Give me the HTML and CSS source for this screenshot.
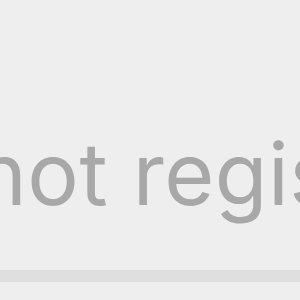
FILE: index.html
```html
<!DOCTYPE html>
<html lang="en">
<head>
    <meta charset="UTF-8">
    <title>Not registered</title>
    <link rel="stylesheet" href="styles.css">
</head>
<body>
    <div class="field">
        <div class="placeholder">not registered</div>
        <div class="underline"></div>
    </div>
</body>
</html>
```

FILE: styles.css
```css
body {
    margin: 0;
    background: #efeeee;
    font-family: Inter, 'Liberation Sans', sans-serif;
    overflow: hidden;
    width: 300px;
    height: 300px;
}
.field {
    padding-top: 124px;
}
.placeholder {
    margin-left: -24px;
    font-size: 86px;
    line-height: 100px;
    letter-spacing: 0.5px;
    color: #a8a8a8;
    white-space: nowrap;
}
.underline {
    margin-top: 46px;
    height: 12px;
    background: #e0dfdf;
}
```
